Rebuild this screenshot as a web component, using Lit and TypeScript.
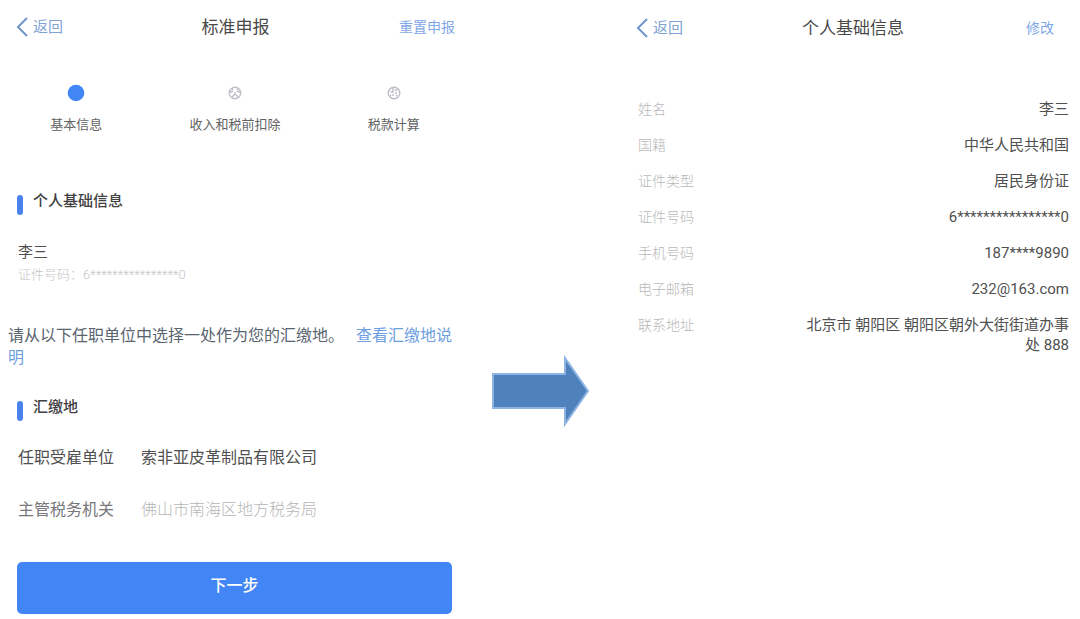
import { LitElement, html, css, svg } from "lit";
import { customElement } from "lit/decorators.js";

const FIELDS: [string, string][] = [
  ["姓名", "李三"],
  ["国籍", "中华人民共和国"],
  ["证件类型", "居民身份证"],
  ["证件号码", "6****************0"],
  ["手机号码", "187****9890"],
  ["电子邮箱", "232@163.com"],
  ["联系地址", "北京市 朝阳区 朝阳区朝外大街街道办事处 888"],
];

const stepIcons = [
  svg`<circle cx="9" cy="9" r="8.3" fill="#4285f4"/>`,
  svg`<g fill="none" stroke="#c0c0c9" stroke-width="1.4"><circle cx="9" cy="9" r="5.8"/><path d="M4 8.5l3-1.5M14 8.5l-3-1.5M9 8v2M6 13l3-3 3 3M6 4.5l1 1.5M12 4.5l-1 1.5"/></g>`,
  svg`<g fill="none" stroke="#bdbdc7" stroke-width="1.4"><circle cx="9" cy="9" r="5.8"/><path d="M8 4v4H5.5M10 6.5l2-1M10 9h2M8 10v2M11 11l1 1M6 11l-1 1"/></g>`,
];

const STEPS = ["基本信息", "收入和税前扣除", "税款计算"];

@customElement("app-root")
export class AppRoot extends LitElement {
  static styles = css`
    :host {
      display: block;
      min-height: 100vh;
      background: #fff;
      color: #505050;
      font-family: Roboto, "Noto Sans CJK SC", sans-serif;
      font-size: 15px;
      line-height: 20px;
    }
    * { box-sizing: border-box; }
    h1, h2, p, dl, dd, ol { margin: 0; padding: 0; font-weight: 400; }
    button { font: inherit; border: 0; background: none; padding: 0; cursor: pointer; }
    a { text-decoration: none; color: #6d9ee0; }
    .page {
      display: grid;
      grid-template-columns: minmax(0, 93fr) minmax(0, 31fr) minmax(0, 92fr);
    }
    .bar {
      display: grid;
      grid-template-columns: 1fr auto 1fr;
      align-items: center;
      height: 54px;
      padding: 0 10px 0 16px;
    }
    .bar.right { padding-top: 2px; }
    .bar.right .action { padding-right: 16px; }
    .back { display: flex; align-items: center; gap: 4px; color: #7fa3d2; justify-self: start; }
    .title { font-size: 17px; color: #484848; }
    .action { justify-self: end; font-size: 14px; color: #7fa8e6; }
    .steps {
      display: grid;
      grid-template-columns: repeat(3, 1fr);
      list-style: none;
      padding: 30px 0 0;
      margin: 0 -8px 0 -3px;
    }
    .step {
      display: flex;
      flex-direction: column;
      align-items: center;
      gap: 13px;
      font-size: 13px;
      color: #636363;
    }
    .step svg { display: block; }
    .heading {
      display: flex;
      align-items: flex-start;
      gap: 10px;
      padding-left: 17px;
      font-size: 15px;
      font-weight: 500;
      color: #404040;
    }
    .heading::before {
      content: "";
      width: 6px;
      height: 20px;
      margin-top: 4px;
      border-radius: 3px;
      background: #4a82ec;
    }
    .basic { margin-top: 56px; }
    .person { padding: 27px 18px 0; }
    .masked { font-size: 13px; color: #c6c6c6; font-weight: 300; margin-top: 3px; }
    .note { padding: 40px 8px 0; font-size: 16px; line-height: 22px; color: #5a6470; }
    .note a { margin-left: 4px; }
    .place { margin-top: 28px; }
    .rows {
      display: grid;
      grid-template-columns: auto 1fr;
      column-gap: 27px;
      row-gap: 32px;
      padding: 27px 18px 0;
      font-size: 16px;
    }
    .rows dt.dim { color: #77777c; }
    .rows dd.dim { color: #b6b6b6; font-weight: 300; }
    .submit { padding: 42px 13px 0 17px; }
    .next {
      width: 100%;
      height: 52px;
      padding-bottom: 4px;
      border-radius: 5px;
      background: #4285f4;
      color: #fff;
      font-size: 16px;
      font-weight: 500;
    }
    .between { padding: 354px 0 0 27px; }
    .between svg { display: block; }
    .fields { padding: 45px 11px 0 18px; display: grid; row-gap: 16px; }
    .field { display: flex; justify-content: space-between; gap: 104px; }
    .field dt { flex: none; font-size: 14px; color: #b8b8b8; font-weight: 300; }
    .field dd { text-align: right; }
  `;

  private back() {
    return html`<button class="back" type="button">
      <svg width="13" height="20" viewBox="0 0 13 20" fill="none" stroke="#6f97cb" stroke-width="2" aria-hidden="true">
        <path d="M11 1L2 10l9 9" />
      </svg>返回</button>`;
  }

  render() {
    return html`
      <main class="page">
        <section>
          <header class="bar">
            ${this.back()}
            <h1 class="title">标准申报</h1>
            <button class="action" type="button">重置申报</button>
          </header>
          <ol class="steps">
            ${STEPS.map((s, i) => html`<li class="step">
              <svg width="18" height="18" viewBox="0 0 18 18" aria-hidden="true">${stepIcons[i]}</svg>
              <span>${s}</span>
            </li>`)}
          </ol>
          <h2 class="heading basic">个人基础信息</h2>
          <div class="person">
            <p>李三</p>
            <p class="masked">证件号码：6****************0</p>
          </div>
          <p class="note">请从以下任职单位中选择一处作为您的汇缴地。&nbsp; <a href="#">查看汇缴地说明</a></p>
          <h2 class="heading place">汇缴地</h2>
          <dl class="rows">
            <dt>任职受雇单位</dt><dd>索非亚皮革制品有限公司</dd>
            <dt class="dim">主管税务机关</dt><dd class="dim">佛山市南海区地方税务局</dd>
          </dl>
          <div class="submit"><button class="next" type="button">下一步</button></div>
        </section>
        <div class="between">
          <svg width="97" height="74" viewBox="0 0 97 74" aria-hidden="true">
            <path d="M1 20H73V4L96 37 73 70V54H1Z" fill="#4f81bd" stroke="#8db4e2" stroke-width="2" />
          </svg>
        </div>
        <section>
          <header class="bar right">
            ${this.back()}
            <h1 class="title">个人基础信息</h1>
            <button class="action" type="button">修改</button>
          </header>
          <dl class="fields">
            ${FIELDS.map(([k, v]) => html`<div class="field"><dt>${k}</dt><dd>${v}</dd></div>`)}
          </dl>
        </section>
      </main>
    `;
  }
}
